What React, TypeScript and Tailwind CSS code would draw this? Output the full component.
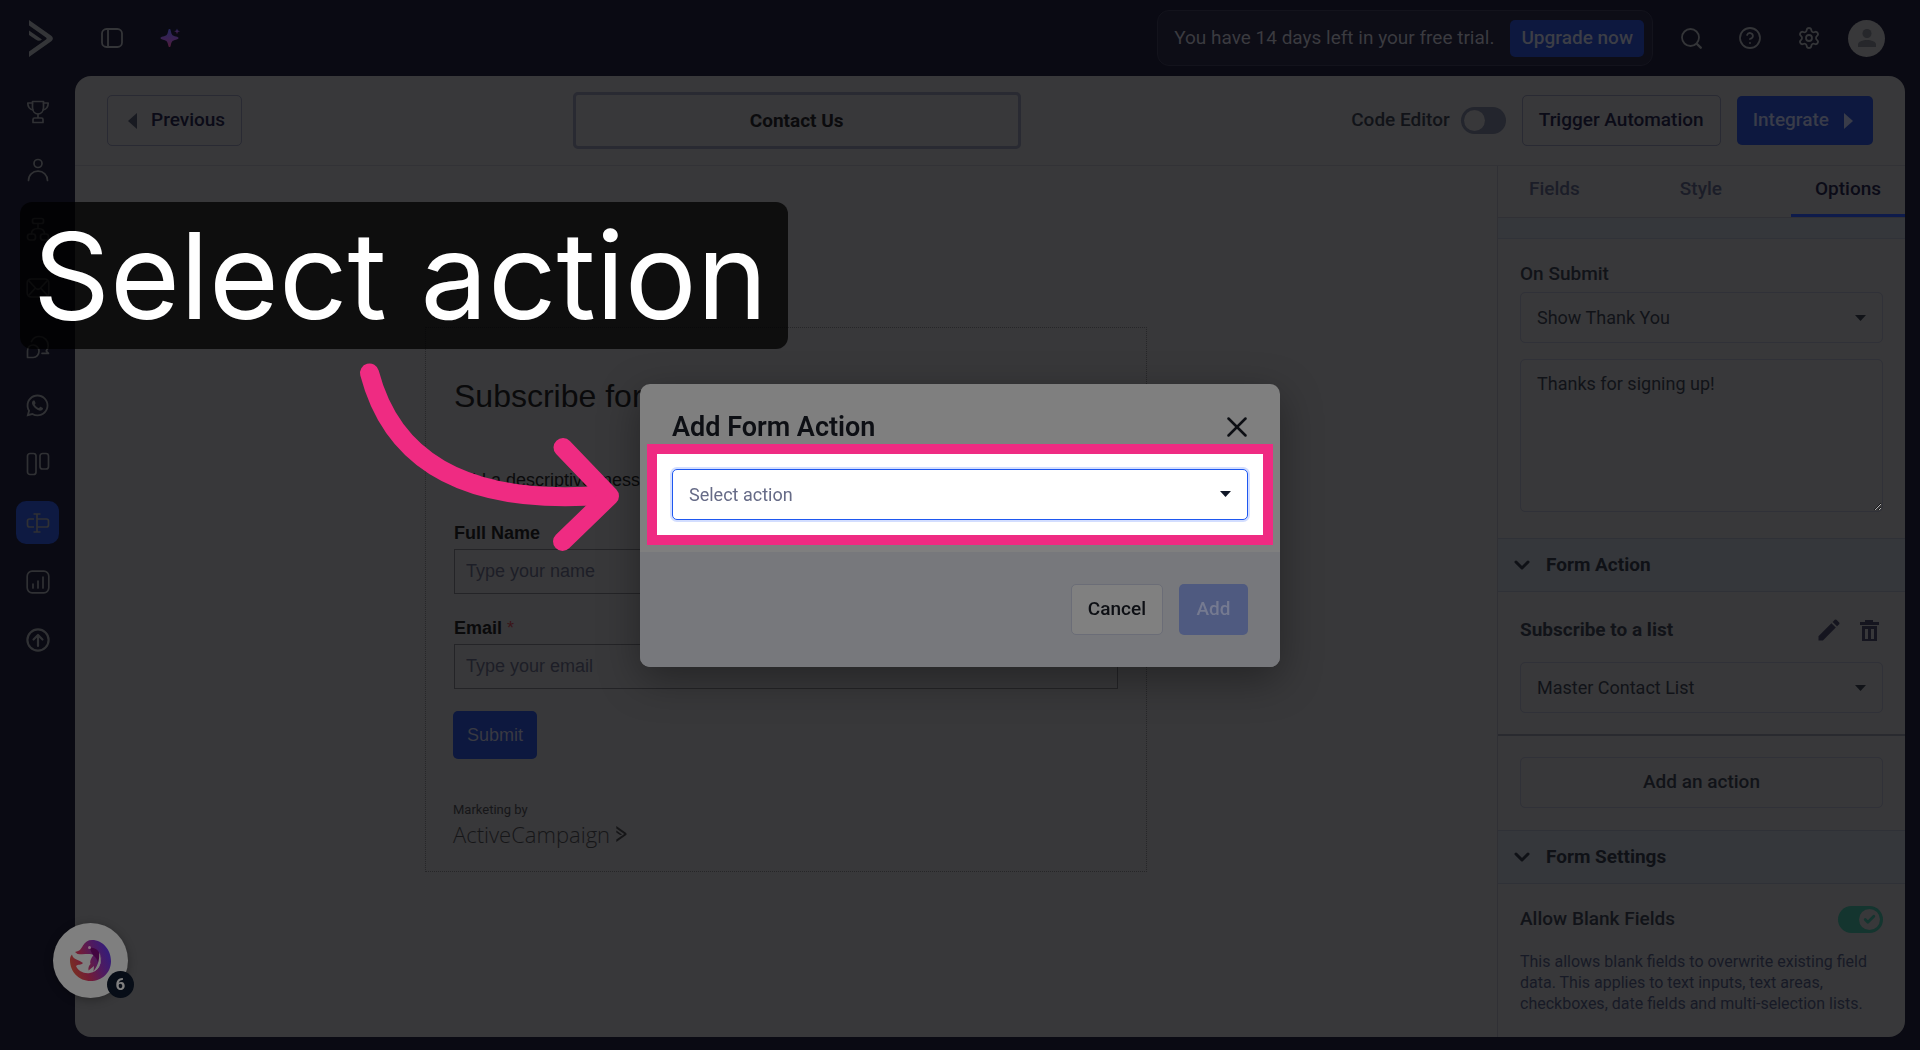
import { useState } from "react";
import type { ReactNode } from "react";
import { Check, ChevronDown, CircleHelp, Settings, X } from "lucide-react";
import { MdEdit } from "react-icons/md";
import { FaWhatsapp } from "react-icons/fa";

interface NavItem {
  label: string;
  active?: boolean;
  icon: ReactNode;
}

const line = {
  width: 24,
  height: 24,
  viewBox: "0 0 24 24",
  fill: "none",
  stroke: "currentColor",
  strokeWidth: 1.7,
  strokeLinecap: "round" as const,
  strokeLinejoin: "round" as const,
};

const navItems: NavItem[] = [
  {
    label: "Get started",
    icon: (
      <svg {...line}>
        <path d="M6.500 1.500h11v6c0 4-2.500 6.500-5.500 6.500s-5.500-2.500-5.500-6.500z" />
        <path d="M6.500 3H1.800c0 4 1.500 6.200 5.200 7M17.500 3h4.700c0 4-1.500 6.200-5.200 7M12 14v4M8.500 18h7c.8 0 1.500.7 1.500 1.500v3H7v-3c0-.8.7-1.500 1.500-1.500z" />
      </svg>
    ),
  },
  {
    label: "Contacts",
    icon: (
      <svg {...line}>
        <circle cx="12" cy="5.500" r="4" />
        <path d="M2.500 22.500c0-5.500 4-9.300 9.500-9.300s9.500 3.800 9.500 9.300" />
      </svg>
    ),
  },
  {
    label: "Automations",
    icon: (
      <svg {...line}>
        <rect x="6.500" y="1.500" width="11" height="5" rx="2" />
        <rect x="1.500" y="17" width="8" height="6" rx="2.500" />
        <rect x="14.500" y="17" width="8" height="6" rx="2.500" />
        <path d="M12 6.500v4M5.500 17c0-4 2-5.500 6.500-5.500s6.500 1.500 6.500 5.500" />
      </svg>
    ),
  },
  {
    label: "Campaigns",
    icon: (
      <svg {...line}>
        <rect x="1.200" y="3" width="21.600" height="18" rx="4" />
        <path d="M3 5l6.500 7c1.500 1.500 3.500 1.500 5 0L21 5M3 19l6-6.500M21 19l-6-6.500" />
      </svg>
    ),
  },
  {
    label: "Conversations",
    icon: (
      <svg {...line}>
        <path d="M1.500 22.500v-6.500c0-3.500 2.500-6 5.700-6 3.300 0 5.800 2.800 5.800 6.200s-2.500 6.300-5.800 6.300z" />
        <path d="M5.500 6.500C7 3.200 10 1.500 13.200 1.500c5 0 9 4 9 8.900 0 2.200-.7 4.100-2 5.600l2.300 2.300h-6.500" />
      </svg>
    ),
  },
  { label: "WhatsApp", icon: <FaWhatsapp size={25} /> },
  {
    label: "Deals",
    icon: (
      <svg {...line}>
        <rect x="1.500" y="1.500" width="8.500" height="21" rx="2.500" />
        <rect x="14" y="1.500" width="8.500" height="15.500" rx="2.500" />
      </svg>
    ),
  },
  {
    label: "Forms",
    active: true,
    icon: (
      <svg {...line} strokeLinecap="butt">
        <path d="M11 3v18M7.500 3h7M7.500 21h7" />
        <path d="M8 8H3.500c-1.200 0-2 .8-2 2v4c0 1.200.8 2 2 2H8M11 8h9.500c1.200 0 2 .8 2 2v4c0 1.200-.8 2-2 2H11" />
      </svg>
    ),
  },
  {
    label: "Reports",
    icon: (
      <svg {...line}>
        <rect x="1.200" y="1.200" width="21.600" height="21.600" rx="5" />
        <path d="M7 14v4M12 11v7M17 7v11" />
      </svg>
    ),
  },
  {
    label: "Upgrade",
    icon: (
      <svg {...line} strokeWidth={2.2}>
        <circle cx="12" cy="12" r="10.600" />
        <path d="M12 18V7.500M7.500 11.500L12 7l4.500 4.500" />
      </svg>
    ),
  },
];

function BrandMark({ className }: { className?: string }) {
  return (
    <svg className={className} viewBox="0 0 24 37" fill="currentColor">
      <path d="M0 0l22 15.500c2.500 1.900 2.500 4.100 0 6L0 37v-5.500L17 19.600c.8-.6.8-1.400 0-2L0 5.500z" />
      <path d="M0 10.500l13 9c-2 1.700-4 1.700-6 .3L0 15z" />
    </svg>
  );
}

function Caret() {
  return (
    <svg className="pointer-events-none absolute right-[17px] top-1/2 -translate-y-1/2" width="11" height="6" viewBox="0 0 11 6" fill="currentColor">
      <path d="M0 0h11L5.500 6z" />
    </svg>
  );
}

function Dropdown({ id, label, value }: { id: string; label: string; value: string }) {
  return (
    <div className="relative text-[#111318]">
      <select
        id={id}
        aria-label={label}
        className="h-[51px] w-full appearance-none rounded-[5px] border border-[#303138] bg-transparent px-4 text-[18px] outline-none"
      >
        <option>{value}</option>
      </select>
      <Caret />
    </div>
  );
}

function SectionHeader({ title }: { title: string }) {
  return (
    <button className="flex h-[54px] w-full items-center gap-3 border-y border-[#2f3137] bg-[#35373b] pl-3 text-left text-[19px] font-bold text-[#0f1116]">
      <ChevronDown size={24} strokeWidth={3} />
      {title}
    </button>
  );
}

function ChatLogo() {
  return (
    <svg width="41" height="41" viewBox="0 0 41 41">
      <defs>
        <linearGradient id="chat" x1="0" y1=".75" x2="1" y2=".35">
          <stop offset="0" stopColor="#7a3220" />
          <stop offset=".35" stopColor="#731c36" />
          <stop offset=".65" stopColor="#521a5c" />
          <stop offset="1" stopColor="#321d7c" />
        </linearGradient>
      </defs>
      <path
        d="M5 12c5-1 6-3 8-6.500C15 2 18 0 22 0c11 0 19 10 19 21 0 12-9 20-20.500 20S0 32 0 20c0-2 .5-4 2-5.500C3 20 8 19 13 23c-2 2.500-5 1-7 3 2 5 8 8 14 7 8-1.300 13-9 10.500-20 1 10-1.500 15-7 18.500l.5-5.500-5.500 4.500c-.5-3 .5-5 2-6.500-1-2 0-5 3-9-4-2-9 0-16-1z"
        fill="url(#chat)"
      />
      <path d="M20 8c5-1 10 3 10.500 9 .4 4-.5 7-2 9.500C28 21 27 19 25 17c-3-3-4-5-5-9z" fill="#420540" />
      <circle cx="19.500" cy="7.500" r="1.500" fill="#8b7180" />
      <path d="M29 12c4 9 1 17-6 20 4-5 7-11 6-20z" fill="#7f7f7f" />
    </svg>
  );
}

function TopBar() {
  return (
    <header className="flex h-[76px] items-center justify-between pr-[35px] pl-[29px] text-[#343538]">
      <div className="flex items-center">
        <BrandMark className="h-[37px] w-6" />
        <button aria-label="Toggle sidebar" className="ml-12">
          <svg width="22" height="20" viewBox="0 0 22 20" fill="none" stroke="currentColor" strokeWidth="1.800">
            <rect x="1" y="1" width="20" height="18" rx="4.500" />
            <path d="M7 1v18" />
          </svg>
        </button>
        <button aria-label="AI assistant" className="ml-[37px]">
          <svg width="20" height="20" viewBox="0 0 20 20" fill="url(#spark)">
            <defs>
              <linearGradient id="spark" x1="0" y1="0" x2="0" y2="1">
                <stop offset="0" stopColor="#24265a" />
                <stop offset=".6" stopColor="#3c2150" />
                <stop offset="1" stopColor="#511c38" />
              </linearGradient>
            </defs>
            <path d="M9.500 1c.9 0 1 .6 1.300 2 .9 4 1.500 4.500 5.200 5.500 1.700.5 2.500.7 2.500 1.600s-.8 1.100-2.500 1.600c-3.700 1-4.300 1.500-5.200 5.300-.3 1.400-.4 2-1.300 2s-1-.6-1.300-2c-.9-3.800-1.500-4.300-5.200-5.300C1.300 11.200.5 11 .5 10.100S1.300 9 3 8.500C6.700 7.500 7.300 7 8.200 3c.3-1.400.4-2 1.300-2z" />
            <path d="M17 .5l.8 2 2.200.8-2.200.8-.8 2.200-.8-2.200-2-.8 2-.8z" />
          </svg>
        </button>
      </div>

      <div className="flex items-center">
        <div className="mr-[26px] flex h-14 items-center gap-4 rounded-xl border border-[#13131c] bg-[#0d0d16] pr-2 pl-4">
          <p className="text-[19px] text-[#3b3b40]">You have 14 days left in your free trial.</p>
          <button className="h-[37px] rounded-[5px] bg-[#0d183f] px-[11px] text-[19px] font-medium text-[#3c3e46]">Upgrade now</button>
        </div>
        <div className="flex items-center gap-[35px]">
          <button aria-label="Search" className="flex w-6 justify-center">
            <svg width="21" height="21" viewBox="0 0 21 21" fill="none" stroke="currentColor" strokeLinecap="round">
              <circle cx="9.500" cy="9.500" r="8.500" strokeWidth="1.800" />
              <path d="M16 16l3.700 3.700" strokeWidth="2.400" />
            </svg>
          </button>
          <button aria-label="Help">
            <CircleHelp size={24} strokeWidth={1.8} />
          </button>
          <button aria-label="Settings">
            <Settings size={24} strokeWidth={1.8} />
          </button>
          <button aria-label="Account" className="-ml-2 flex size-[37px] items-center justify-center rounded-full bg-[#38383a] text-[#26272b]">
            <svg width="18" height="18" viewBox="0 0 18 18" fill="currentColor">
              <circle cx="9" cy="4.500" r="4.500" />
              <path d="M0 18v-2.500C0 12.500 5 11 9 11s9 1.500 9 4.500V18z" />
            </svg>
          </button>
        </div>
      </div>
    </header>
  );
}

function FormHeader() {
  const [codeEditor, setCodeEditor] = useState(false);

  return (
    <div className="flex h-[90px] items-center justify-between border-b border-[#323236] px-8 text-[19px] text-[#0b0b17]">
      <button className="flex h-[51px] items-center gap-[14px] rounded-[5px] border border-[#292a33] pr-4 pl-5 font-medium">
        <svg width="9" height="16" viewBox="0 0 9 16" fill="#181a21">
          <path d="M9 0v16L0 8z" />
        </svg>
        Previous
      </button>
      <input
        aria-label="Form name"
        defaultValue="Contact Us"
        className="h-[57px] w-[448px] rounded-[5px] border-[3px] border-[#292a32] bg-transparent text-center font-bold text-[#0b0b0d] outline-none"
      />
      <div className="flex items-center gap-4">
        <label className="flex items-center gap-[11px] font-medium text-[#111318]">
          Code Editor
          <input
            type="checkbox"
            checked={codeEditor}
            onChange={() => setCodeEditor(!codeEditor)}
            className="h-[27px] w-[45px] appearance-none rounded-full bg-[#23252d] p-[3px] before:block before:size-[21px] before:rounded-full before:bg-[#38383a] checked:before:translate-x-[18px]"
          />
        </label>
        <button className="h-[51px] rounded-[5px] border border-[#292a33] px-4 font-medium">Trigger Automation</button>
        <button className="flex h-[49px] items-center gap-[15px] rounded-[5px] bg-[#0d183f] pr-5 pl-4 font-medium text-[#393c49]">
          Integrate
          <svg width="9" height="16" viewBox="0 0 9 16" fill="currentColor">
            <path d="M0 0v16l9-8z" />
          </svg>
        </button>
      </div>
    </div>
  );
}

function FormPreview() {
  return (
    <main className="flex flex-1 justify-center pt-[161px] font-['Liberation_Sans',Arial,sans-serif] text-[18px] text-[#0a0a0b]">
      <form className="h-[545px] w-[722px] border border-dotted border-[#262628] px-7">
        <h1 className="mt-12 text-[32px] leading-[40px]">Subscribe for Updates</h1>
        <p className="mt-[50px] leading-[28px]">Add a descriptive message telling what your visitor is signing up for here.</p>
        <label htmlFor="full-name" className="mt-[25px] block leading-[28px] font-bold">
          Full Name
        </label>
        <input
          id="full-name"
          placeholder="Type your name"
          className="mt-[2px] block h-[45px] w-full border border-[#242427] bg-transparent px-[11px] placeholder:text-[#1d1e27]"
        />
        <label htmlFor="email" className="mt-5 block leading-[28px] font-bold">
          Email <span className="font-normal text-[#3b1418]">*</span>
        </label>
        <input
          id="email"
          placeholder="Type your email"
          className="mt-[2px] block h-[45px] w-full border border-[#242427] bg-transparent px-[11px] placeholder:text-[#1d1e27]"
        />
        <button type="button" className="mt-[22px] -ml-px h-12 rounded-[5px] bg-[#0d183f] px-[14px] text-[#393a42]">
          Submit
        </button>
        <p className="mt-[39px] -ml-px font-['Roboto',sans-serif] text-[13px] leading-[24px] text-[#161618]">Marketing by</p>
        <a href="#" className="-ml-px flex items-center gap-[6px] font-['Open_Sans',sans-serif] text-[22px] leading-[24px] font-light text-[#161618]">
          ActiveCampaign
          <BrandMark className="h-4 w-[11px]" />
        </a>
      </form>
    </main>
  );
}

function OptionsPanel() {
  const [allowBlank, setAllowBlank] = useState(true);

  return (
    <aside className="w-[408px] shrink-0 overflow-hidden border-l border-[#303035] text-[19px] text-[#111318]">
      <div role="tablist" className="flex h-[52px] justify-between border-b border-[#303035] font-medium">
        <button role="tab" className="px-[31px] pb-1 text-[#1b1d28]">Fields</button>
        <button role="tab" className="px-[31px] pb-1 text-[#1b1d28]">Style</button>
        <button role="tab" aria-selected className="w-[114px] border-b-[3px] border-[#0e1b4b] pb-px text-[#0b0b17]">Options</button>
      </div>
      <div className="h-[21px] border-b border-[#303238] bg-[#35373b]" />

      <div className="px-[22px] pt-[22px] pb-[26px]">
        <label htmlFor="on-submit" className="mb-[5px] block leading-[26px] font-medium">
          On Submit
        </label>
        <Dropdown id="on-submit" label="On Submit" value="Show Thank You" />
        <textarea
          aria-label="Thank you message"
          defaultValue="Thanks for signing up!"
          className="mt-4 block h-[153px] w-full resize-y rounded-[5px] border border-[#303138] bg-transparent px-4 py-3 text-[18px] leading-[24px] outline-none"
        />
      </div>

      <SectionHeader title="Form Action" />
      <div className="border-b-2 border-[#292a2f] px-[22px] pt-[22px] pb-[21px]">
        <div className="mb-4 flex h-8 items-center justify-between font-bold">
          Subscribe to a list
          <div className="flex items-center gap-3 text-[#15151f]">
            <button aria-label="Edit">
              <MdEdit size={28} />
            </button>
            <button aria-label="Delete" className="w-7">
              <svg className="mx-auto" width="19" height="21" viewBox="0 0 19 21" fill="currentColor">
                <path d="M0 2h5V0h8v2h6v3H0zM2 6h15v15H2zM5 9v10h3V9zM11 9v10h3V9z" fillRule="evenodd" />
              </svg>
            </button>
          </div>
        </div>
        <Dropdown id="list" label="List" value="Master Contact List" />
      </div>
      <div className="px-[22px] pt-[21px] pb-[22px]">
        <button className="h-[51px] w-full rounded-[5px] border border-[#303138] font-medium">Add an action</button>
      </div>

      <SectionHeader title="Form Settings" />
      <div className="px-[22px] pt-[21px]">
        <label className="flex items-center justify-between font-medium">
          Allow Blank Fields
          <span className="relative h-[27px]">
            <input
              type="checkbox"
              checked={allowBlank}
              onChange={() => setAllowBlank(!allowBlank)}
              className="block h-[27px] w-[45px] appearance-none rounded-full bg-[#23252d] p-[3px] before:block before:size-[21px] before:rounded-full before:bg-[#38383a] checked:bg-[#14352f] checked:before:translate-x-[18px]"
            />
            {allowBlank && <Check className="absolute top-[7px] right-[7px] text-[#14352f]" size={13} strokeWidth={5} />}
          </span>
        </label>
        <p className="mt-[17px] text-[16px] leading-[21px] text-[#171a26]">
          This allows blank fields to overwrite existing field data. This applies to text inputs, text areas, checkboxes, date fields and
          multi-selection lists.
        </p>
      </div>
    </aside>
  );
}

function AddActionModal() {
  return (
    <div className="fixed inset-0 flex items-center justify-center">
      <div
        role="dialog"
        aria-labelledby="modal-title"
        className="w-[640px] overflow-hidden rounded-[10px] bg-[#7f7f7f] text-[#0d0f14] shadow-[0_12px_40px_rgba(0,0,0,0.35)]"
      >
        <div className="flex h-[60px] items-end justify-between px-8">
          <h2 id="modal-title" className="text-[27px] leading-[33px] font-semibold">
            Add Form Action
          </h2>
          <button aria-label="Close" className="-mr-[6px]">
            <X size={34} strokeWidth={1.8} />
          </button>
        </div>
        <div className="mx-[7px] mb-[7px] border-10 border-[#ef2b82] bg-white px-[15px] py-[15px]">
          <div className="relative text-[#111827]">
            <select
              aria-label="Select action"
              className="block h-[51px] w-full appearance-none rounded-[5px] border border-[#1f58f0] bg-white px-4 text-[18px] text-[#666b87] shadow-[0_0_0_2px_#d3deff] outline-none"
            >
              <option>Select action</option>
              <option>Subscribe to a list</option>
              <option>Add a tag</option>
            </select>
            <Caret />
          </div>
        </div>
        <div className="flex h-[115px] justify-end gap-4 bg-[#77787c] px-8 pt-8 text-[19px] font-medium">
          <button className="h-[51px] rounded-[5px] border border-[#6b6d77] bg-[#808080] px-4">Cancel</button>
          <button className="h-[51px] w-[69px] rounded-[5px] bg-[#4f5a80] text-[#757a90]">Add</button>
        </div>
      </div>
    </div>
  );
}

function App() {
  return (
    <div className="relative flex h-screen flex-col overflow-hidden bg-[#0a0a13] font-['Roboto',sans-serif]">
      <TopBar />
      <div className="flex min-h-0 flex-1 pr-[15px] pb-[13px]">
        <nav className="flex h-[586px] w-[75px] shrink-0 flex-col items-center justify-between pt-[14px] text-[#303134]">
          {navItems.map((item) => (
            <a
              key={item.label}
              href="#"
              aria-label={item.label}
              className={`flex size-[43px] items-center justify-center rounded-[10px] ${item.active ? "bg-[#0e1a42]" : ""}`}
            >
              {item.icon}
            </a>
          ))}
        </nav>
        <div className="flex flex-1 flex-col overflow-hidden rounded-2xl bg-[#38383a]">
          <FormHeader />
          <div className="flex min-h-0 flex-1">
            <FormPreview />
            <OptionsPanel />
          </div>
        </div>
      </div>

      <AddActionModal />

      <button
        aria-label="Open chat"
        className="absolute bottom-[52px] left-[53px] flex size-[75px] items-center justify-center rounded-full bg-[#7f7f7f] shadow-[0_2px_10px_rgba(0,0,0,0.3)]"
      >
        <ChatLogo />
        <span className="absolute -right-[6px] bottom-0 flex size-[27px] items-center justify-center rounded-full bg-[#070d17] text-[17px] font-bold text-[#808080]">
          6
        </span>
      </button>

      <div className="absolute top-[202px] left-5 flex h-[147px] items-center rounded-xl bg-black/75 pr-5 pl-[13px] font-['Inter',sans-serif] text-[120px] text-white">
        Select action
      </div>
      <svg
        className="absolute top-[350px] left-[350px]"
        width="290"
        height="210"
        viewBox="350 350 290 210"
        fill="none"
        stroke="#ef2b82"
        strokeLinecap="round"
        strokeLinejoin="round"
      >
        <path d="M369.500 373C391 455 458 507 606 495" strokeWidth="19" />
        <path d="M563 447.500L609.500 496L562.500 541.500" strokeWidth="19" />
      </svg>
    </div>
  );
}

export default App;
